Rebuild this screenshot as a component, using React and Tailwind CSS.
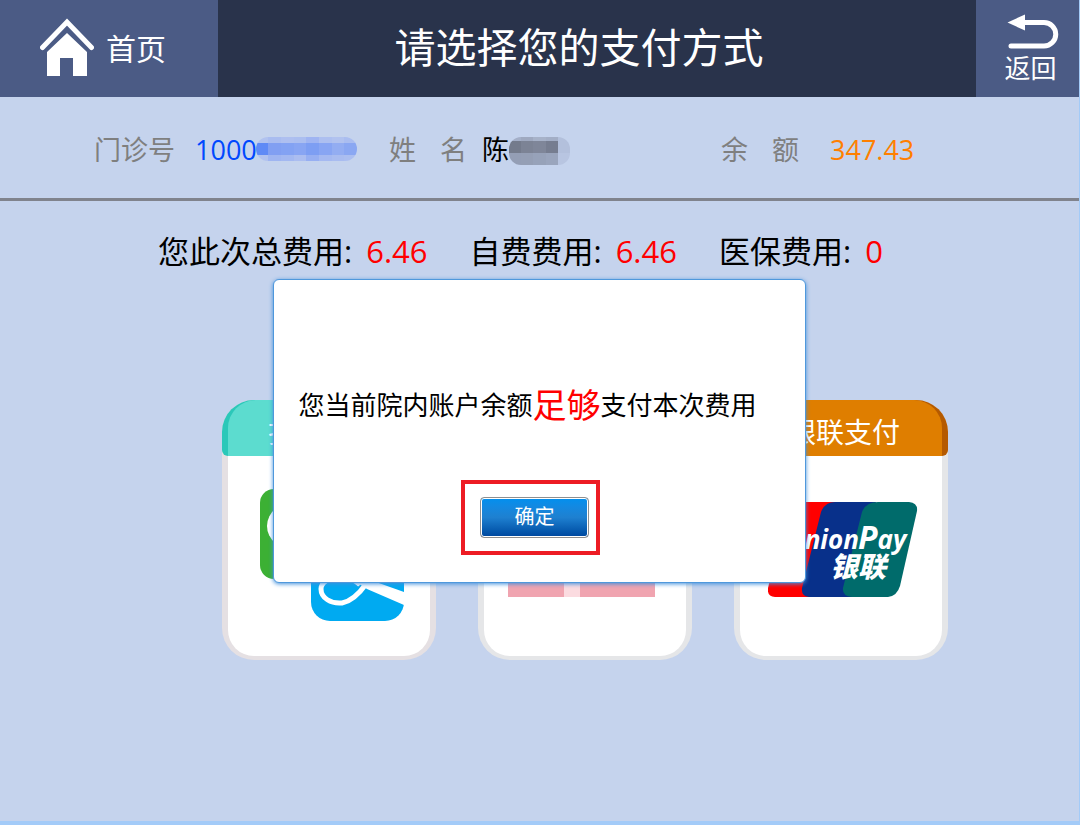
import { useState } from 'react';
import clsx from 'clsx';

const FEES = [
  { label: '您此次总费用:', value: '6.46' },
  { label: '自费费用:', value: '6.46' },
  { label: '医保费用:', value: '0' }
];

const ID_MASK = [
  { height: 'h-1.5', cells: ['bg-[#b1c2ef]', 'bg-[#a9bcf0]', 'bg-[#aebff0]', 'bg-[#abbef0]', 'bg-[#9fb4f2]', 'bg-[#adbff0]', 'bg-[#b1c2ef]', 'bg-[#aabdf0]'] },
  { height: 'h-3', cells: ['bg-[#5f8af6]', 'bg-[#819ff2]', 'bg-[#83a2f3]', 'bg-[#88a5f3]', 'bg-[#7d9ef3]', 'bg-[#88a5f3]', 'bg-[#93adf2]', 'bg-[#8aa7f2]'] },
  { height: 'h-1.5', cells: ['bg-[#b1c2ef]', 'bg-[#9fb5f1]', 'bg-[#a3b8f1]', 'bg-[#abbdf0]', 'bg-[#97aff2]', 'bg-[#a5b9f1]', 'bg-[#a9bcf0]', 'bg-[#abbef0]'] }
];

const NAME_MASK = [
  { height: 'h-1', cells: ['bg-[#a4afc8]', 'bg-[#9fa9c0]', 'bg-[#a7b2c9]', 'bg-[#a3aec6]', 'bg-[#b3c0dc]'] },
  { height: 'h-3', cells: ['bg-[#747b8c]', 'bg-[#7c8395]', 'bg-[#7f8699]', 'bg-[#767d90]', 'bg-[#b3c0dc]'] },
  { height: 'h-3', cells: ['bg-[#949eb5]', 'bg-[#959fb5]', 'bg-[#97a2b9]', 'bg-[#9aa5bd]', 'bg-[#b8c5e1]'] }
];

function Mask({ rows, className }) {
  return (
    <span className={clsx('flex flex-col overflow-hidden', className)} aria-hidden="true">
      {rows.map((row, i) => (
        <span key={i} className={clsx('flex', row.height)}>
          {row.cells.map((color, j) => <span key={j} className={clsx('flex-1', color)} />)}
        </span>
      ))}
    </span>
  );
}

function HomeIcon() {
  return (
    <svg width="54" height="58" viewBox="0 0 54 58" aria-hidden="true">
      <path d="M2.5 29.5 L27 4 L51.5 29.5" fill="none" stroke="#fff" strokeWidth="5" strokeLinecap="round" />
      <path d="M27 15 L47 34 V58 H33 V40 H20 V58 H7 V34 Z" fill="#fff" />
    </svg>
  );
}

function BackIcon() {
  return (
    <svg width="52" height="36" viewBox="0 0 52 36" aria-hidden="true">
      <path d="M15 8.5 H37 A11.7 11.7 0 0 1 37 32 H4" fill="none" stroke="#fff" strokeWidth="5" strokeLinecap="round" />
      <path d="M0.5 8.5 L18 0.5 V16.5 Z" fill="#fff" />
    </svg>
  );
}

function ScanPayLogo() {
  return (
    <svg width="144" height="132" viewBox="0 0 144 132" aria-hidden="true">
      <rect width="91" height="90" rx="14" fill="#3cb034" />
      <ellipse cx="37" cy="37" rx="30" ry="25" fill="#fff" />
      <rect x="51" y="40" width="93" height="92" rx="19" fill="#00aaf1" />
      <path d="M100 96 C90 84 61 87 61 100 C61 109 71 115 82 114 C92 112 99 105 106 95" fill="none" stroke="#fff" strokeWidth="5" />
      <path d="M92 90 L102 88 L144 103 V116 L107 100 Z" fill="#fff" />
    </svg>
  );
}

function CardLogo() {
  return (
    <svg width="147" height="95" viewBox="0 0 147 95" aria-hidden="true">
      <rect width="56" height="95" fill="#f0a4b0" />
      <rect x="56" width="16" height="95" fill="#fbdbe0" />
      <rect x="72" width="75" height="95" fill="#f0a4b0" />
    </svg>
  );
}

function UnionPayLogo() {
  return (
    <svg width="150" height="95" viewBox="0 0 150 95" role="img" aria-label="UnionPay">
      <path d="M30 0 H70 L48 95 H7 Q-1 95 0 86 L18 10 Q21 0 30 0 Z" fill="#f00" />
      <path d="M67 0 H108 L86 95 H41 Q33 94 34 86 L53 10 Q57 0 67 0 Z" fill="#08308a" />
      <path d="M110 0 H141 Q150 1 149 9 L132 84 Q129 94 120 95 H84 Q74 94 75 86 L94 10 Q98 0 110 0 Z" fill="#006b6b" />
      <g fill="#fff" fontWeight="700" fontStyle="italic" fontFamily="Open Sans, sans-serif">
        <text x="91" y="47" textAnchor="end" fontSize="26">Union</text>
        <text x="90" y="47" fontSize="32">P<tspan fontSize="26">ay</tspan></text>
        <text x="62" y="75" fontSize="28" fontWeight="900" fontFamily="Noto Sans CJK SC, sans-serif">银联</text>
      </g>
    </svg>
  );
}

function PayCard({ title, edge, header, body, logo }) {
  return (
    <button className={clsx('flex h-[260px] w-[214px] flex-col overflow-hidden rounded-[32px]', body)}>
      <span className={clsx('block h-14 w-full overflow-hidden', edge)}>
        <span className={clsx('flex h-full items-center justify-center pt-2 text-[28px] text-white', header)}>{title}</span>
      </span>
      <span className="flex w-full flex-1 px-1.5 pb-1">
        <span className="flex flex-1 items-start justify-center rounded-b-[26px] bg-white">{logo}</span>
      </span>
    </button>
  );
}

export default function App() {
  const [open, setOpen] = useState(true);

  return (
    <div className="relative flex min-h-screen flex-col border-r border-b-4 border-[#a3cbf8] bg-[#c5d3ed] font-['Open_Sans','Noto_Sans_CJK_SC',sans-serif] text-black">
      <header className="flex h-[97px] bg-[#29334b] text-white">
        <button className="flex w-[218px] items-center gap-3 bg-[#4b5b85] pl-10 pb-1">
          <HomeIcon />
          <span className="pt-1 text-[30px] leading-10">首页</span>
        </button>
        <h1 className="flex-1 self-center pr-9 pb-1 text-center text-[41px] leading-12">请选择您的支付方式</h1>
        <button className="flex w-[103px] flex-col items-center bg-[#4b5b85] pt-[14px] pl-1.5 text-[26px] leading-9">
          <span className="pl-1"><BackIcon /></span>
          返回
        </button>
      </header>

      <section className="flex h-[104px] items-center border-b-3 border-[#80838d] pt-1.5 pl-[94px] text-[27px] text-[#7f7f7f]">
        <span className="w-[101px]">门诊号</span>
        <span className="flex w-[194px] items-center text-[#0048ff]">
          1000
          <Mask rows={ID_MASK} className="-ml-px mb-1 h-6 w-[101px] rounded-full" />
        </span>
        <span className="flex w-[93px] gap-6"><span>姓</span><span>名</span></span>
        <span className="flex w-[239px] items-center text-black">
          陈
          <Mask rows={NAME_MASK} className="h-7 w-[61px] rounded-xl" />
        </span>
        <span className="flex w-[109px] gap-6"><span>余</span><span>额</span></span>
        <span className="text-[#ff7f00]">347.43</span>
      </section>

      <section className="flex gap-[42px] pt-[26px] pl-[158px] text-[31px] leading-12">
        {FEES.map(fee => (
          <div key={fee.label} className="flex gap-[14px]">
            <span>{fee.label}</span>
            <span className="text-[#f00]">{fee.value}</span>
          </div>
        ))}
      </section>

      <main className="flex justify-center gap-[42px] pt-[125px] pl-[91px]">
        <PayCard
          title="扫码支付"
          edge="rounded-bl-md bg-[#2bc8b9] pl-1.5"
          header="rounded-tl-[28px] bg-[#5cdccf] pr-4"
          body="bg-[#e5e0e3]"
          logo={<span className="pt-[33px] pl-1.5"><ScanPayLogo /></span>}
        />
        <PayCard
          edge="bg-[#ee6b7d]"
          body="bg-[#e5e6e8]"
          logo={<span className="pt-[46px] pr-2"><CardLogo /></span>}
        />
        <PayCard
          title="银联支付"
          edge="rounded-br-md bg-[#b55a00] pr-1.5"
          header="rounded-tr-[28px] bg-[#df7e00] pl-3"
          body="bg-[#e5e6e8]"
          logo={<span className="pt-[46px] pl-1"><UnionPayLogo /></span>}
        />
      </main>

      {open && (
        <div className="absolute inset-0 flex items-center justify-center pt-10">
          <div
            role="dialog"
            aria-modal="true"
            className="flex h-[304px] w-[533px] flex-col items-center rounded-md border border-[#4f98dc] bg-white pt-[99px] shadow-[0_1px_4px_#3f8fdc]"
          >
            <p className="mr-6 flex items-center text-[26px] leading-[52px]">
              您当前院内账户余额
              <strong className="text-[34px] font-normal text-[#f00]">足够</strong>
              支付本次费用
            </p>
            <div className="mt-[49px] mr-[18px] border-4 border-[#ed1c24] py-[13px] pr-[7px] pl-[15px]">
              <button
                onClick={() => setOpen(false)}
                className="block h-[41px] w-[109px] rounded-sm border border-[#8f8f8f] bg-linear-to-b from-[#0090ef] from-0% via-[#1e80d0] via-50% to-[#00479e] to-100% text-xl text-white ring-1 ring-white ring-inset"
              >
                确定
              </button>
            </div>
          </div>
        </div>
      )}
    </div>
  );
}
